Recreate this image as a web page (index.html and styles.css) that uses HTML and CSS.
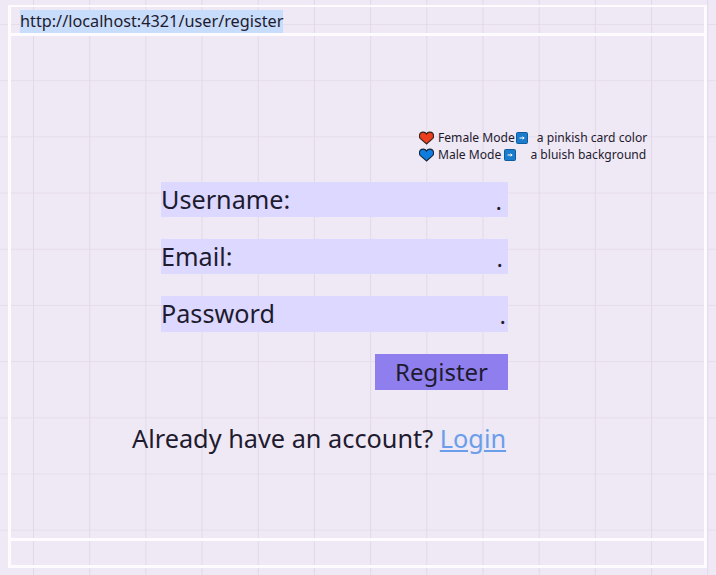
FILE: index.html
```html
<!DOCTYPE html>
<html lang="en">
<head>
    <meta charset="UTF-8">
    <meta name="viewport" content="width=device-width, initial-scale=1.0">
    <title>Register</title>
    <link rel="stylesheet" href="styles.css">
</head>
<body>
    <div class="frame">
        <header class="topbar">
            <span class="url">http://localhost:4321/user/register</span>
        </header>
        <main class="content">
            <div class="legend">
                <div class="legend-row pink">
                    <svg class="heart" viewBox="0 0 16 14"><path d="M8 13.300 1.500 7.600C-.3 5.600.3 2 2.800 1 4.900.3 7 1 8 2.800 9 1 11.100.3 13.200 1c2.500 1 3.100 4.600 1.300 6.600z" fill="#ec3f1d" stroke="#33201c" stroke-width="1.200"/></svg>
                    <span>Female Mode</span>
                    <svg class="arrow" viewBox="0 0 12 12"><rect x=".5" y=".5" width="11" height="11" rx="1" fill="#1b7ccc" stroke="#0f5c9f"/><path d="M3.500 6h4.500M6.500 4.800 8.200 6 6.500 7.200" fill="none" stroke="#fff" stroke-width="1"/></svg>
                    <span class="note">a pinkish card color</span>
                </div>
                <div class="legend-row blue">
                    <svg class="heart" viewBox="0 0 16 14"><path d="M8 13.300 1.500 7.600C-.3 5.600.3 2 2.800 1 4.900.3 7 1 8 2.800 9 1 11.100.3 13.200 1c2.500 1 3.100 4.600 1.300 6.600z" fill="#0f7de0" stroke="#14263a" stroke-width="1.200"/></svg>
                    <span>Male Mode</span>
                    <svg class="arrow" viewBox="0 0 12 12"><rect x=".5" y=".5" width="11" height="11" rx="1" fill="#1b7ccc" stroke="#0f5c9f"/><path d="M3.500 6h4.500M6.500 4.800 8.200 6 6.500 7.200" fill="none" stroke="#fff" stroke-width="1"/></svg>
                    <span class="note">a bluish background</span>
                </div>
            </div>
            <form class="register-form">
                <div class="field"><span>Username:</span><span class="dot">.</span></div>
                <div class="field"><span>Email:</span><span class="dot dot-email">.</span></div>
                <div class="field"><span>Password</span><span class="dot dot-password">.</span></div>
                <button type="button" class="register-btn">Register</button>
            </form>
            <p class="login-line">Already have an account? <a href="#">Login</a></p>
        </main>
        <footer class="bottombar"></footer>
    </div>
</body>
</html>
```
FILE: styles.css
```css
html, body {
    height: 100%;
}

body {
    margin: 0;
    padding: 5px 8px 7px 8px;
    box-sizing: border-box;
    font-family: "Noto Sans", sans-serif;
    color: #1e1b2e;
    background-color: #efe8f5;
    background-image:
        linear-gradient(to right, #e1d9e7 1px, transparent 1px),
        linear-gradient(to bottom, #e5ddea 1px, transparent 1px);
    background-size: 56.2px 56.2px;
    background-position: 33px 24px;
}

.frame {
    width: 699px;
    height: 563px;
    box-sizing: border-box;
    border: 3px solid #fdfbfe;
    border-top-width: 2px;
    display: flex;
    flex-direction: column;
}

.topbar {
    height: 26px;
    flex-shrink: 0;
    box-sizing: content-box;
    border-bottom: 3px solid #fdfbfe;
    padding-left: 9px;
}

.url {
    display: inline-block;
    margin-top: 3px;
    height: 23px;
    font-size: 16.250px;
    line-height: 23px;
    background-color: #c8dcfb;
}

.content {
    flex: 1;
    padding-top: 93px;
    padding-left: 150px;
}

.legend {
    margin-left: 258px;
    font-size: 12.100px;
    line-height: 17px;
}

.legend-row {
    display: flex;
    align-items: center;
}

.heart {
    width: 15px;
    height: 14px;
    margin-right: 4px;
}

.arrow {
    width: 12px;
    height: 12px;
}

.pink .arrow {
    margin: 0 9px 0 1px;
}

.blue .arrow {
    margin: 0 14px 0 3px;
}

.register-form {
    width: 347px;
    margin-top: 18.700px;
    display: flex;
    flex-direction: column;
    gap: 21.800px;
}

.field {
    height: 35.500px;
    display: flex;
    justify-content: space-between;
    background-color: #dcd8ff;
    font-size: 25.200px;
    line-height: 35px;
}

.dot {
    padding-right: 6px;
    line-height: 37px;
    font-size: 24px;
}

.dot-email {
    padding-right: 5px;
}

.dot-password {
    padding-right: 2px;
}

.register-btn {
    align-self: flex-end;
    width: 133px;
    height: 36px;
    padding: 0;
    border: none;
    background-color: #8f7fee;
    color: #1e1b2e;
    font-family: inherit;
    font-size: 24px;
    line-height: 36px;
}

.login-line {
    margin: 28px 0 0 -29px;
    font-size: 25.300px;
    line-height: 40px;
}

.login-line a {
    color: #6a9eea;
}

.bottombar {
    height: 24px;
    flex-shrink: 0;
    border-top: 3px solid #fdfbfe;
}
```
